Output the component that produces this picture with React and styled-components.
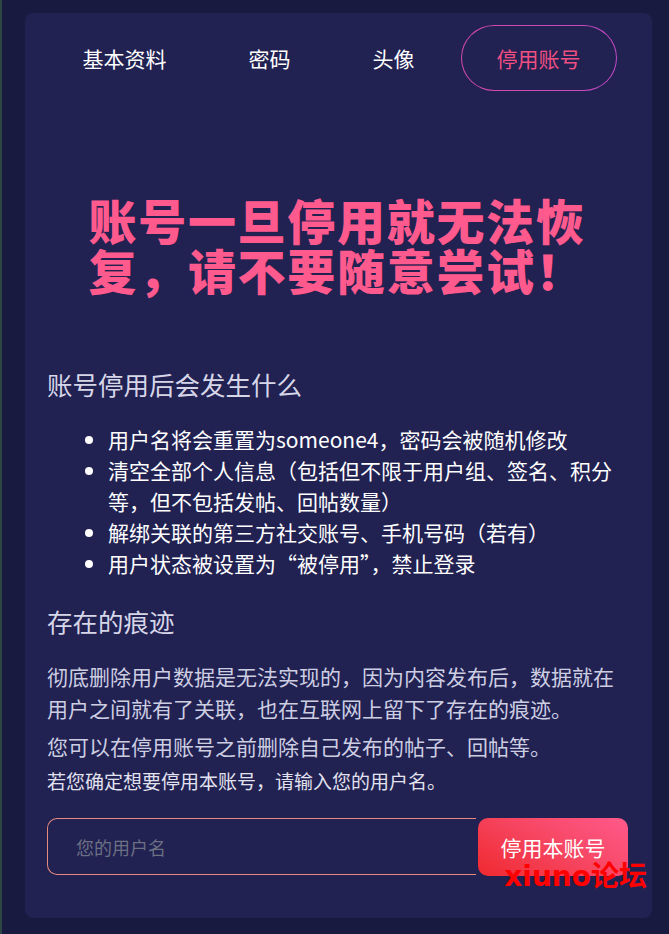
import React from 'react'
import styled, { createGlobalStyle } from 'styled-components'

const GlobalStyle = createGlobalStyle`
  html, body {
    margin: 0;
    padding: 0;
    background: #191a3f;
  }
  body {
    font-family: "Noto Sans CJK SC", "Noto Sans", sans-serif;
  }
`

const tabs = ['基本资料', '密码', '头像', '停用账号']

const consequences = [
  '用户名将会重置为someone4，密码会被随机修改',
  '清空全部个人信息（包括但不限于用户组、签名、积分等，但不包括发帖、回帖数量）',
  '解绑关联的第三方社交账号、手机号码（若有）',
  '用户状态被设置为“被停用”，禁止登录',
]

export default function App() {
  return (
    <Page>
      <GlobalStyle />
      <Card>
        <Tabs>
          {tabs.map((t, i) => (
            <Tab key={t} active={i === tabs.length - 1}>{t}</Tab>
          ))}
        </Tabs>

        <Warning>账号一旦停用就无法恢复，请不要随意尝试！</Warning>

        <Heading>账号停用后会发生什么</Heading>
        <List>
          {consequences.map(c => <Item key={c}>{c}</Item>)}
        </List>

        <Heading second>存在的痕迹</Heading>
        <Paragraph>彻底删除用户数据是无法实现的，因为内容发布后，数据就在用户之间就有了关联，也在互联网上留下了存在的痕迹。</Paragraph>
        <Paragraph spaced>您可以在停用账号之前删除自己发布的帖子、回帖等。</Paragraph>
        <Prompt>若您确定想要停用本账号，请输入您的用户名。</Prompt>

        <Form onSubmit={e => e.preventDefault()}>
          <Input placeholder="您的用户名" />
          <Button type="submit">停用本账号</Button>
          <Watermark>xiuno论坛</Watermark>
        </Form>
      </Card>
    </Page>
  )
}

const Page = styled.div`
  min-height: 934px;
  box-sizing: border-box;
  padding: 13px 17px 15px 23px;
  border-left: 2px solid #2d4746;
`

const Card = styled.div`
  background: #212152;
  border-radius: 8px;
  padding: 12px 22px 42px;
`

const Tabs = styled.nav`
  display: flex;
  justify-content: center;
  gap: 10px;
  padding-right: 14px;
`

const Tab = styled.div`
  flex-shrink: 0;
  white-space: nowrap;
  height: 66px;
  padding: 0 35px;
  box-sizing: border-box;
  display: flex;
  align-items: center;
  font-size: 21px;
  color: ${p => (p.active ? '#f04f82' : '#ffffff')};
  border-radius: 33px;
  border: 1.5px solid transparent;
  background: ${p =>
    p.active
      ? 'linear-gradient(#212152, #212152) padding-box, linear-gradient(90deg, #d64aa8, #c64ac6) border-box'
      : 'none'};
`

const Warning = styled.h1`
  width: 500px;
  margin: 103px auto 0;
  font-size: 48px;
  line-height: 50px;
  letter-spacing: 1.7px;
  font-weight: 900;
  color: #ff5a8d;
`

const Heading = styled.h2`
  margin: ${p => (p.second ? '25px' : '73px')} 0 0;
  font-size: 25.5px;
  line-height: 34px;
  font-weight: 400;
  color: #d6d6e8;
`

const List = styled.ul`
  margin: 23px 0 0;
  padding-left: 61px;
  padding-right: 10px;
`

const Item = styled.li`
  font-size: 21px;
  line-height: 31px;
  color: #ffffff;
`

const Paragraph = styled.p`
  margin: ${p => (p.spaced ? '6px' : '22px')} 0 0;
  font-size: 21px;
  line-height: 32px;
  color: #cdcee2;
`

const Prompt = styled.p`
  margin: 4px 0 0;
  font-size: 19px;
  line-height: 30px;
  color: #e2e2f0;
`

const Form = styled.form`
  position: relative;
  display: flex;
  gap: 2px;
  margin: 22px 2px 0 0;
`

const Input = styled.input`
  flex: 1;
  min-width: 0;
  height: 57px;
  box-sizing: border-box;
  padding: 0 28px;
  background: transparent;
  border: 1px solid #e58a7e;
  border-right: none;
  border-radius: 10px 0 0 10px;
  font-family: inherit;
  font-size: 18px;
  color: #ffffff;
  outline: none;

  &::placeholder {
    color: #6b7082;
  }
`

const Button = styled.button`
  width: 150px;
  height: 58px;
  border: none;
  border-radius: 10px;
  background: linear-gradient(30deg, #f0292f 0%, #f64560 50%, #ff5a8c 100%);
  color: #ffffff;
  font-family: inherit;
  font-size: 21px;
  cursor: pointer;
`

const Watermark = styled.span`
  position: absolute;
  right: -19px;
  top: 44px;
  font-family: "DejaVu Sans", "Noto Sans CJK SC", sans-serif;
  font-weight: 700;
  font-size: 28px;
  line-height: 30px;
  color: #ff0000;
  pointer-events: none;
`
